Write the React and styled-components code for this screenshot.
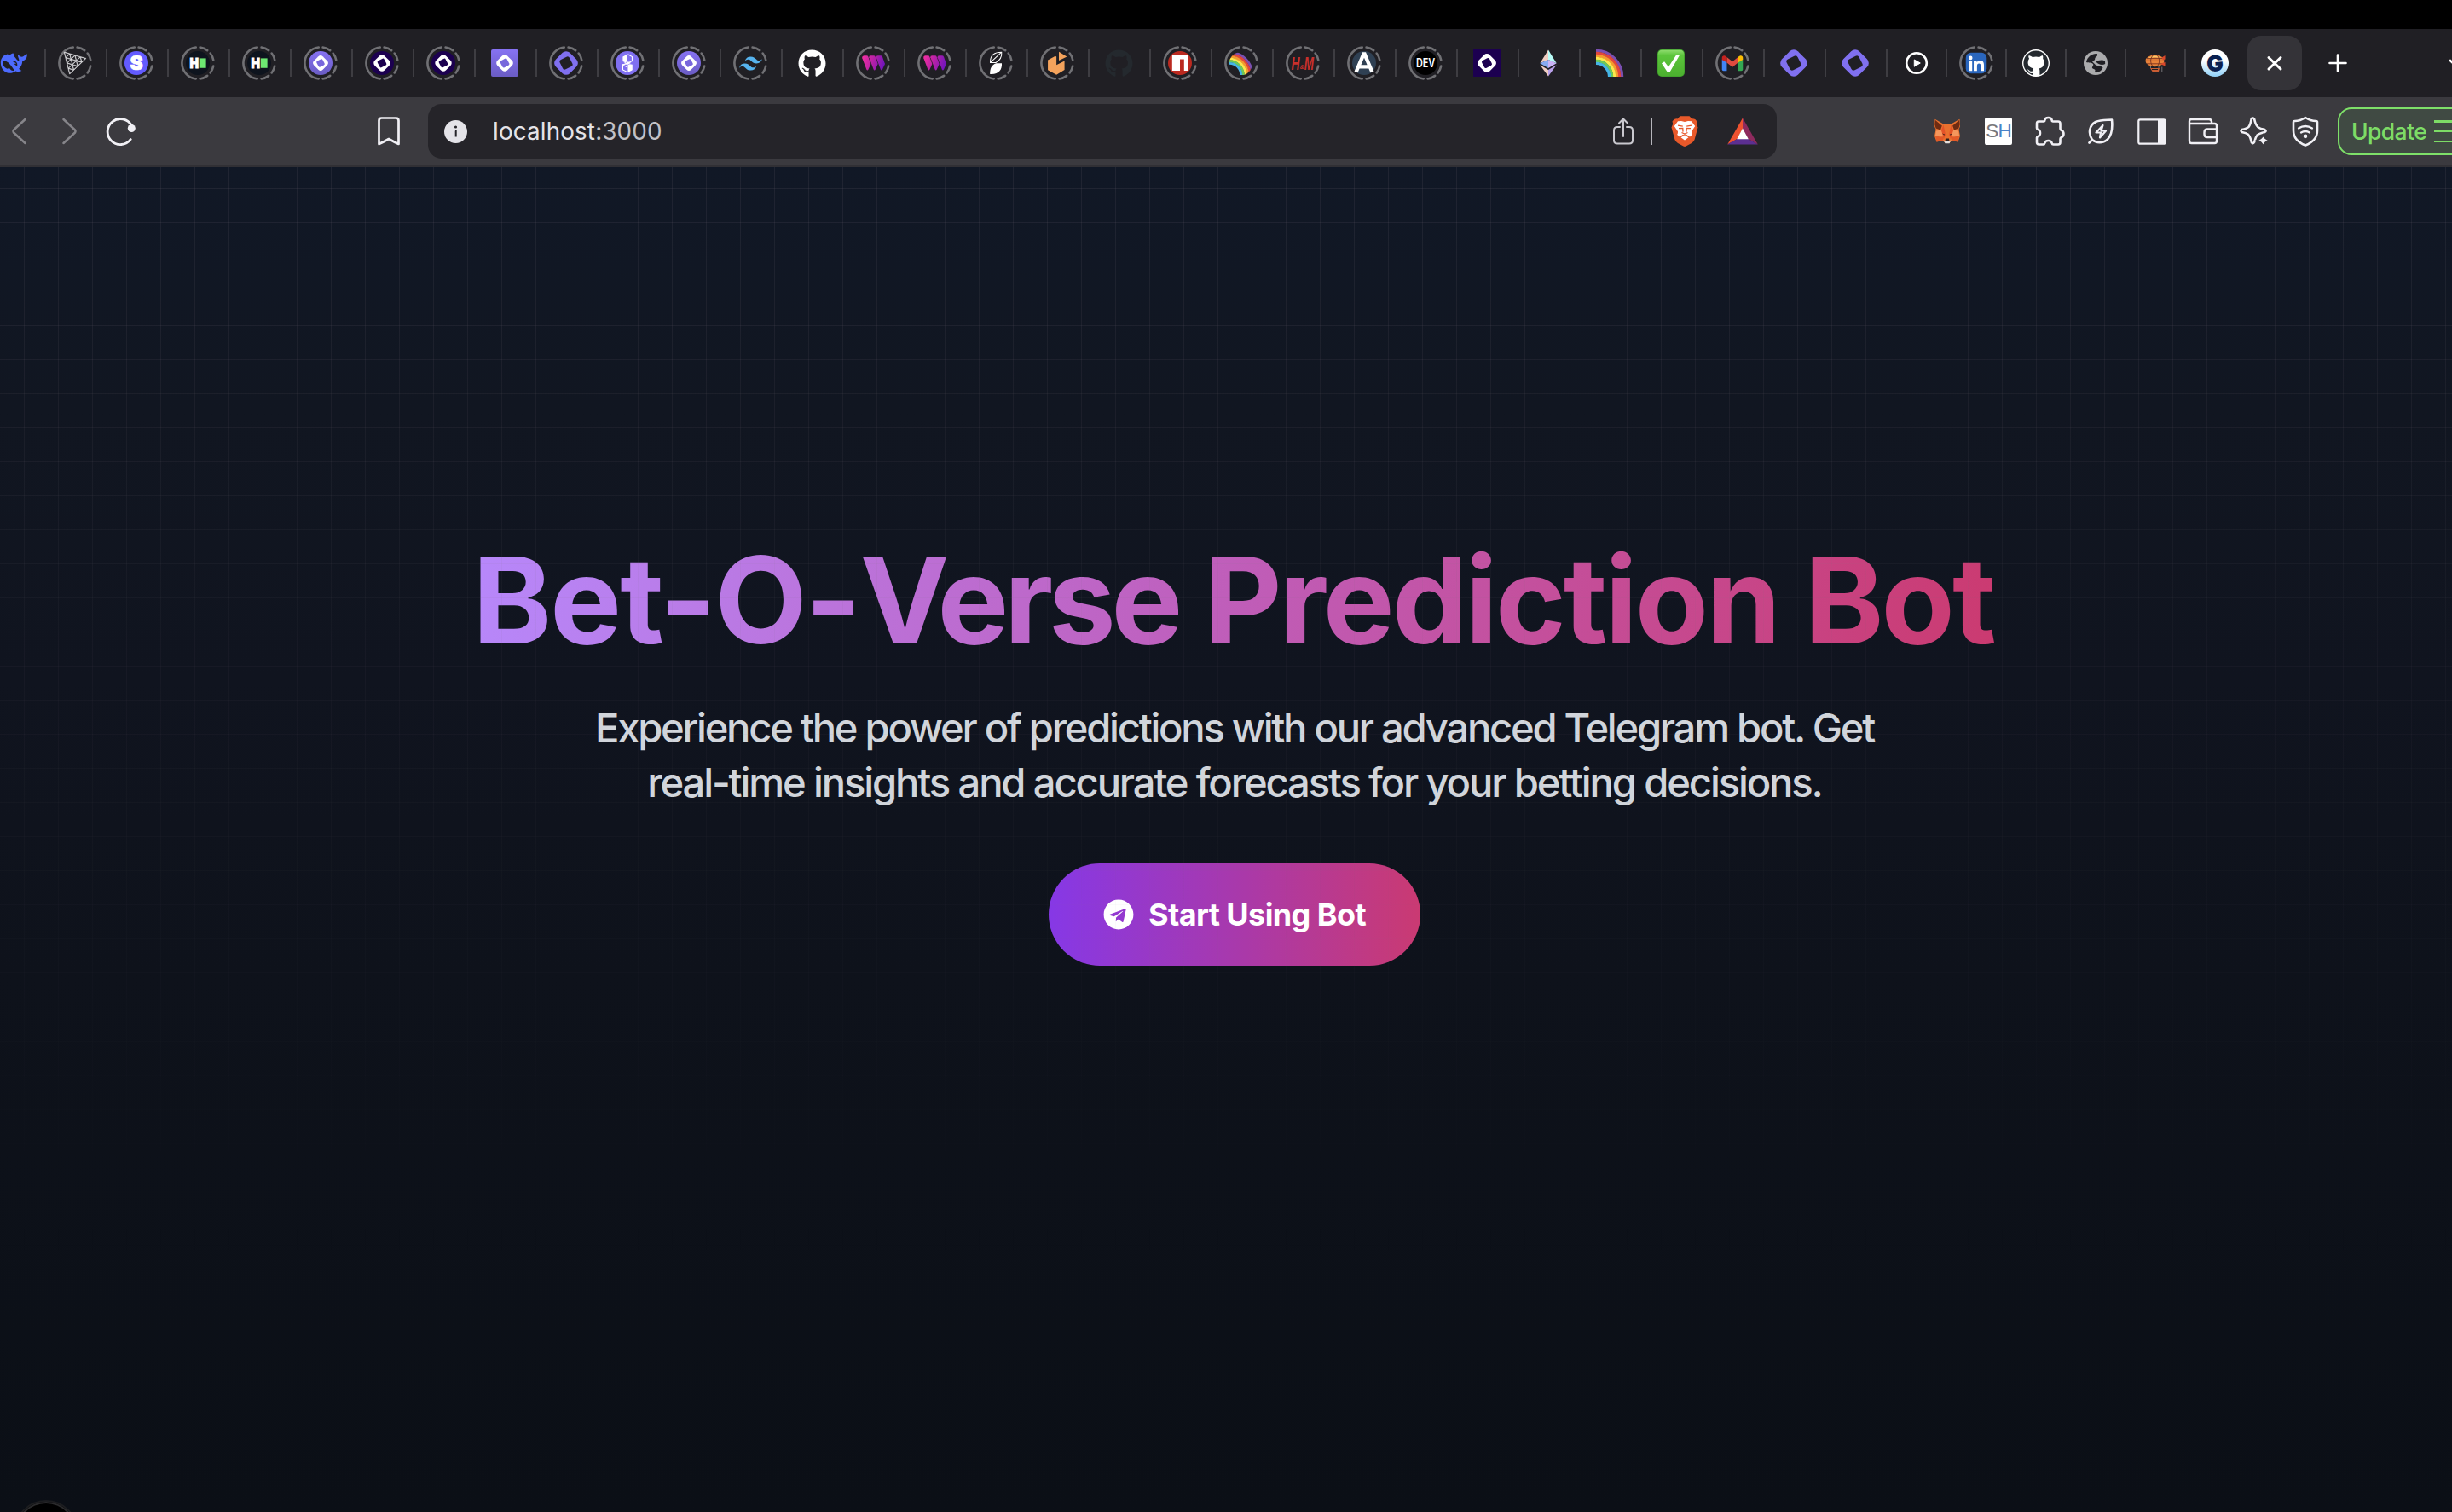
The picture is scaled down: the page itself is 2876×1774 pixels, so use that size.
import React from "react";
import styled, { createGlobalStyle } from "styled-components";
import { FaGithub, FaTelegram } from "react-icons/fa";
import { SiTailwindcss, SiThreedotjs } from "react-icons/si";

const GlobalStyle = createGlobalStyle`
  * { box-sizing: border-box; }
  html, body, #root { margin: 0; height: 100%; }
  body { background: #000; overflow: hidden; font-family: Inter, "Noto Sans", sans-serif; }
`;

const Screen = styled.div`
  height: 1774px;
  width: 100%;
  overflow: hidden;
  display: flex;
  flex-direction: column;
  padding-top: 34px;
  background: #000;
`;

/* ---------- tab strip ---------- */

const TabStrip = styled.div`
  flex: none;
  height: 80px;
  display: flex;
  align-items: center;
  background: #201f24;
  overflow: hidden;
`;

const Tab = styled.div`
  flex: none;
  width: ${(p) => (p.$narrow ? 70 : 72)}px;
  margin-left: ${(p) => (p.$first ? -20 : 0)}px;
  padding-right: ${(p) => (p.$narrow ? 0 : 2)}px;
  display: flex;
  align-items: center;
`;

const TabDivider = styled.span`
  width: 2px;
  height: 32px;
  background: #3e3d42;
`;

const Favicon = styled.span`
  flex: 1;
  display: grid;
  place-items: center;
  > * { grid-area: 1 / 1; display: block; overflow: visible; }
`;

const ActiveTab = styled.div`
  flex: none;
  width: 64px;
  height: 64px;
  margin-left: 4px;
  border-radius: 16px;
  background: #343338;
  display: grid;
  place-items: center;
`;

const NewTab = styled.div`
  flex: none;
  width: 84px;
  display: grid;
  place-items: center;
`;

const TabSearch = styled.div`
  margin-left: 88px;
  flex: none;
  display: grid;
`;

const point = (deg, r) => {
  const a = (deg * Math.PI) / 180;
  return `${(20 + r * Math.sin(a)).toFixed(2)} ${(20 - r * Math.cos(a)).toFixed(2)}`;
};
const arc = (from, to) => `M${point(from, 18.6)}A18.6 18.6 0 0 1 ${point(to, 18.6)}`;
const ringPath = [[8, 37], [52, 79], [101, 128], [143, 172], [187, 353]]
  .map(([a, b]) => arc(a, b))
  .join("");

const Ring = () => (
  <svg width="40" height="40" viewBox="0 0 40 40" fill="none" stroke="#707074" strokeWidth="2.6" strokeLinecap="round">
    <path d={ringPath} />
  </svg>
);

const Glyph = ({ size = 32, children, ...rest }) => (
  <svg width={size} height={size} viewBox="0 0 32 32" {...rest}>
    {children}
  </svg>
);

const Lozenge = ({ color = "#8070f0", hole = "#201f24", scale = 1 }) => (
  <g transform={`translate(16 16) scale(${scale})`}>
    <rect x="-13.2" y="-13.2" width="26.4" height="26.4" rx="6.8" fill={color} transform="rotate(45)" />
    <rect x="-7.2" y="-7.2" width="14.4" height="14.4" rx="3" fill={hole} transform="rotate(-27)" />
  </g>
);

const Whale = () => (
  <Glyph>
    <path
      fill="#4d6bfe"
      d="M0.8 15C1 9 5 6.200 9 5.400L10.500 7C12 6.600 13.800 4.600 15.600 4.600C16.400 6.200 15.800 7 17 8.400C19 10.300 19.600 12.500 22.300 13.600C23 12 21 9.600 20.800 6C22.500 6.800 23 8.400 24.600 8.600C26.600 8.900 28 8.300 29 6.600C30 5.800 30.600 6.200 31.800 5.200C32 9.800 30 12.600 26.300 13.600C26 18 24.500 20.500 22.200 22.800C23 24 24.300 24.600 25.400 25C23.600 26.200 20.600 26.200 18.400 25.400C15 27.800 11.500 28.400 8 27.200C3.300 25.400 0.700 20.800 0.800 15Z"
    />
    <path fill="#201f24" d="M4.200 13.500C8 13.200 11.600 16.600 14 20.600C15.500 22.800 16.600 24 17 25.200C13 25.600 12 23.200 10.600 21.600C9 24.600 4 21 3.200 16.600Z" />
    <path fill="none" stroke="#201f24" strokeWidth="1.400" d="M15.600 14.200C18.300 14 20 16 19.600 18.600L17.400 17" />
  </Glyph>
);

const LetterS = () => (
  <Glyph size={28}>
    <circle cx="16" cy="16" r="16" fill="#635bff" />
    <text x="16" y="25.400" textAnchor="middle" fontFamily="Inter, sans-serif" fontWeight="900" fontSize="26" fill="#fff" stroke="#fff" strokeWidth="0.800">S</text>
  </Glyph>
);

const HashBlock = () => (
  <Glyph size={28}>
    <circle cx="16" cy="16" r="16" fill="#0e141e" />
    <text x="5" y="22.400" textLength="12" lengthAdjust="spacingAndGlyphs" fontFamily="Inter, sans-serif" fontWeight="900" fontSize="17.500" fill="#fff" stroke="#fff" strokeWidth="0.900">H</text>
    <rect x="18" y="9.600" width="9" height="13" fill="#6de872" />
  </Glyph>
);

const TokenCircle = ({ dark }) => (
  <Glyph size={28}>
    <defs>
      <linearGradient id="tokenFill" x1="0" y1="0" x2="0" y2="1">
        <stop offset="0" stopColor="#8672f2" />
        <stop offset="1" stopColor="#6a5cc4" />
      </linearGradient>
    </defs>
    <circle cx="16" cy="16" r="16" fill={dark ? "#1c0050" : "url(#tokenFill)"} />
    <Lozenge color="#fff" hole={dark ? "#1c0050" : "#7867dc"} scale={dark ? 0.7 : 0.63} />
  </Glyph>
);

const TokenSquare = () => (
  <Glyph>
    <rect width="32" height="32" rx="2" fill="url(#tokenFill)" />
    <Lozenge color="#fff" hole="#7867dc" scale={0.62} />
  </Glyph>
);

const TokenNavy = () => (
  <Glyph>
    <rect width="32" height="32" fill="#1c0050" />
    <Lozenge color="#fff" hole="#1c0050" scale={0.69} />
  </Glyph>
);

const TokenPlain = ({ size = 32 }) => (
  <Glyph size={size}>
    <Lozenge />
  </Glyph>
);

const Cubes = () => (
  <Glyph size={28}>
    <circle cx="16" cy="16" r="16" fill="#8070f0" />
    <path fill="#fff" d="M15.500 4.300L9.600 7.400V13.600L15.500 16ZM16.500 18.600V28.600L22.600 25.300V18L19 17.400ZM11 15.800L16 14L21 15.800L16 18.400Z" />
    <path fill="none" stroke="#fff" strokeWidth="1.200" d="M16.500 4.300L22.200 7.400V13.400L17 15.400M15.500 28L9.700 25V18.300L15.500 21.600M9.700 18L15.500 17" />
  </Glyph>
);

const Weights = () => (
  <Glyph size={28}>
    <defs>
      <linearGradient id="webFill" gradientUnits="userSpaceOnUse" x1="1" y1="10" x2="32" y2="20">
        <stop offset="0" stopColor="#f02fa0" />
        <stop offset="0.500" stopColor="#b320a8" />
        <stop offset="1" stopColor="#6a13bd" />
      </linearGradient>
    </defs>
    <g fill="url(#webFill)">
      <path d="M4 6H7.500Q9 6 9.600 7.600L13 17L9.700 24.600Q8.400 27 7.200 24.600L1.500 9.400Q0.800 6.400 4 6Z" />
      <path d="M12.800 6H17Q18.500 6 19.100 7.600L22.500 17L19.200 24.600Q17.900 27 16.700 24.600L10.600 8.400Q10.300 6.200 12.800 6Z" />
      <path d="M22.400 6H26.300Q28 6 28.600 7.600L32 17L28.600 24.600Q27.300 27 26.100 24.600L20.100 8.400Q19.800 6.200 22.400 6Z" />
    </g>
  </Glyph>
);

const Petals = () => (
  <Glyph size={28}>
    <path fill="none" stroke="#fff" strokeWidth="1.200" d="M23.700 1.500C16 1.500 9 4 8.600 13.500V15.500H16C22 12 24.400 8 23.700 1.500ZM9 15L22.500 2.500" />
    <path fill="#fff" d="M8.200 30.800C8 24 10 18.500 16.500 16.400H24C24.600 25 20 31.500 8.200 30.800Z" />
  </Glyph>
);

const PackageBox = () => (
  <Glyph size={28}>
    <path fill="#f4a35c" d="M3.500 12L13.500 6.500L15 7.300V18.500L25.800 13.200V25L15 31.600L3.500 25.500Z" />
    <path fill="#f4a35c" d="M18.300 0.800L29 7.300L18.300 12.600Z" />
  </Glyph>
);

const PackageN = () => (
  <Glyph size={28}>
    <circle cx="16" cy="16" r="16" fill="#bb2a20" />
    <path fill="#fff" d="M5.500 5.500H26.800V26.300H21.500V10.800H16V26.300H5.500Z" />
  </Glyph>
);

const bands = ["#7a4fb0", "#e2463c", "#f59a2e", "#fbe64d", "#6cc95a", "#45b4e6"];

const Rainbow = ({ size = 32, round }) => (
  <Glyph size={size}>
    <defs>
      <clipPath id="roundClip">
        <circle cx="15" cy="17" r="15.500" />
      </clipPath>
    </defs>
    <g clipPath={round ? "url(#roundClip)" : undefined}>
      {bands.map((color, i) => {
        const r = 30.600 - i * 3;
        return <path key={color} fill="none" stroke={color} strokeWidth="3.300" d={`M0 ${32 - r}A${r} ${r} 0 0 1 ${r} 32`} />;
      })}
    </g>
  </Glyph>
);

const HandM = () => (
  <Glyph size={28}>
    <g fontFamily="'Liberation Sans', sans-serif" fontStyle="italic" fontWeight="700" fill="#c9302c">
      <text x="0.500" y="25" fontSize="25" textLength="11.500" lengthAdjust="spacingAndGlyphs">H</text>
      <text x="12.400" y="23.500" fontSize="9" textLength="5.200" lengthAdjust="spacingAndGlyphs">&amp;</text>
      <text x="18" y="25" fontSize="26" textLength="12.800" lengthAdjust="spacingAndGlyphs">M</text>
    </g>
  </Glyph>
);

const LetterA = () => (
  <Glyph size={28}>
    <circle cx="16" cy="16" r="16" fill="#2f4053" />
    <path fill="none" stroke="#fff" strokeWidth="5" strokeLinejoin="bevel" d="M5.200 28L16 2.500L26.800 28M8 21H24" />
  </Glyph>
);

const DevBadge = () => (
  <Glyph size={28}>
    <circle cx="16" cy="16" r="16" fill="#000" />
    <text x="3.300" y="21.600" textLength="25.600" lengthAdjust="spacingAndGlyphs" fontFamily="Inter, sans-serif" fontWeight="600" fontSize="16" fill="#fff">DEV</text>
  </Glyph>
);

const Ether = () => (
  <Glyph>
    <path fill="#f0cdc2" d="M16 0.500L6.300 16.200L16 12Z" />
    <path fill="#b8fbf6" d="M16 0.500L25.700 16.200L16 12Z" />
    <path fill="#88aaf1" d="M6.300 16.200L16 12V22Z" />
    <path fill="#c9b3f5" d="M25.700 16.200L16 12V22Z" />
    <path fill="#f0cdc2" d="M6.300 18.200L16 24V31.600Z" />
    <path fill="#b8a0ea" d="M25.700 18.200L16 24V31.600Z" />
  </Glyph>
);

const CheckMark = () => (
  <Glyph>
    <defs>
      <linearGradient id="checkFill" x1="0" y1="0" x2="0" y2="1">
        <stop offset="0" stopColor="#8fdc6f" />
        <stop offset="0.200" stopColor="#5cc53c" />
        <stop offset="1" stopColor="#4cb02f" />
      </linearGradient>
    </defs>
    <rect width="32" height="32" rx="5" fill="#3f9e2c" />
    <rect x="0.800" y="0.800" width="30.400" height="30.400" rx="4.500" fill="url(#checkFill)" />
    <path fill="#fff" d="M5 16.200L8.200 14.200L13 20.500L22.300 6.200H26.300L14.300 27H12Z" />
  </Glyph>
);

const Mail = () => (
  <Glyph size={28}>
    <path fill="#4285f4" d="M2 11L8.500 14.500V26.500H4Q2 26.500 2 24.500Z" />
    <path fill="#34a853" d="M30 11L23.500 14.500V26.500H28Q30 26.500 30 24.500Z" />
    <path fill="#e04a3f" d="M8.500 8L16 14L23.500 8V15.500L16 21.500L8.500 15.500Z" />
    <path fill="#c5221f" d="M2 9C2 5.600 5.500 4.600 8.500 8V15.500L2 11.500Z" />
    <path fill="#fbbc04" d="M30 9C30 5.600 26.500 4.600 23.500 8V15.500L30 11.500Z" />
  </Glyph>
);

const Play = () => (
  <Glyph>
    <circle cx="16" cy="16" r="11.800" fill="none" stroke="#fff" strokeWidth="2.600" />
    <path fill="#fff" stroke="#fff" strokeWidth="1" strokeLinejoin="round" d="M13.300 12L20.300 16L13.300 20.200Z" />
  </Glyph>
);

const LinkedIn = () => (
  <Glyph size={28}>
    <rect x="2" y="2" width="28" height="28" rx="7" fill="#2a66bd" />
    <circle cx="8.300" cy="9" r="2.600" fill="#fff" />
    <path fill="#fff" d="M6.100 13H10.500V26.500H6.100ZM12.600 13H16.700V15C17.600 13.500 19.300 12.700 21.200 12.700C25 12.700 26.300 15 26.300 19V26.500H22V19.800C22 17.800 21.300 16.600 19.600 16.600C17.900 16.600 17 17.900 17 19.900V26.500H12.600Z" />
  </Glyph>
);

const GithubBadge = () => (
  <Glyph>
    <circle cx="16" cy="16" r="15.300" fill="#24292f" stroke="#fff" strokeWidth="1.400" />
    <path fill="#fff" d="M7.200 8.200Q7.600 6.700 8.400 7.200Q10.500 8 12 9Q16 8 20 9Q22 7.700 23.700 7.100Q24.700 8.200 24.200 10.800Q26 13 25.600 16Q25 21.600 19.400 22.400Q20.600 23.600 20.400 25.400V30.600Q16 32 12.200 30.800V27.800C8.500 28.600 8 26.500 7 24.800L5.200 23.200C7.800 23 8.300 25.800 10 25.800Q11.400 26 12.200 25.200Q12.300 23.500 13.200 22.400Q7 21.400 6.600 16Q6.500 12.800 8 10.800Q7.300 9.600 7.200 8.200Z" />
  </Glyph>
);

const Globe = () => (
  <Glyph>
    <circle cx="16" cy="16" r="14" fill="#ababad" />
    <path fill="#201f24" d="M17.800 5C12.500 4.300 6.500 8 5 14.500C5.500 16.500 10.500 14.500 13 17C14 19 11.500 20.500 12 22C13.500 23.500 15.500 23 15.500 24.500C15 26 15 27.300 16.500 27.200C20 27 23.500 24.500 24.500 21.500C23 19.300 18.500 19.800 16 18.300C14.500 16 10.500 14.300 13 13.200C15.500 12.600 15.200 11.500 15.300 10C16.500 8.600 19 8 17.800 5Z" />
    <path fill="#201f24" d="M16.500 14.500C18.500 12.500 24.500 11.500 27 13.800L27.200 17C24 19 19 18 16.500 14.500Z" />
  </Glyph>
);

const Airship = () => (
  <Glyph>
    <ellipse cx="15.500" cy="13.400" rx="11" ry="6.800" fill="#e8823a" />
    <path fill="#f7c869" d="M7 10.500Q15 5 23 10Q15 8.500 7 10.500Z" />
    <path fill="none" stroke="#6d2a1d" strokeWidth="0.800" d="M5 13.400H26M13 7Q8 13 13 20M18.500 7Q23 13 18.500 20M6 10.600H24.500M6 16.800H24.500" />
    <path fill="#d9482b" d="M23.500 9.500L27.500 7V11.500L25 12.500ZM24 16L27.500 15V19.500L22.500 17.600Z" />
    <path fill="#c95d33" d="M10 22H21L20 26H12.500Z" />
    <path fill="#201f24" d="M12 23H19V24H12Z" />
    <path stroke="#8a8a8c" strokeWidth="0.800" d="M10.500 19V22M20 19V22M23.800 20.500V26" />
  </Glyph>
);

const LetterG = () => (
  <Glyph>
    <defs>
      <linearGradient id="gFill" x1="0" y1="0" x2="0" y2="1">
        <stop offset="0.400" stopColor="#fff" />
        <stop offset="1" stopColor="#8fd0f8" />
      </linearGradient>
    </defs>
    <circle cx="16" cy="16" r="16" fill="url(#gFill)" />
    <text x="16" y="25.600" textAnchor="middle" fontFamily="Inter, sans-serif" fontWeight="900" fontSize="26" fill="#0a2050" transform="rotate(-5 16 16)">G</text>
  </Glyph>
);

const tabs = [
  { icon: <Whale /> },
  { icon: <SiThreedotjs size={26} color="#e4e4e6" stroke="#e4e4e6" strokeWidth={0.4} />, ring: true },
  { icon: <LetterS />, ring: true },
  { icon: <HashBlock />, ring: true },
  { icon: <HashBlock />, ring: true },
  { icon: <TokenCircle />, ring: true },
  { icon: <TokenCircle dark />, ring: true },
  { icon: <TokenCircle dark />, ring: true },
  { icon: <TokenSquare /> },
  { icon: <TokenPlain size={28} />, ring: true },
  { icon: <Cubes />, ring: true },
  { icon: <TokenCircle />, ring: true },
  { icon: <SiTailwindcss size={27} color="#56b3ee" />, ring: true },
  { icon: <FaGithub size={33} color="#fff" /> },
  { icon: <Weights />, ring: true },
  { icon: <Weights />, ring: true },
  { icon: <Petals />, ring: true },
  { icon: <PackageBox />, ring: true },
  { icon: <FaGithub size={33} color="#24292e" /> },
  { icon: <PackageN />, ring: true },
  { icon: <Rainbow size={28} round />, ring: true },
  { icon: <HandM />, ring: true },
  { icon: <LetterA />, ring: true },
  { icon: <DevBadge />, ring: true },
  { icon: <TokenNavy /> },
  { icon: <Ether /> },
  { icon: <Rainbow /> },
  { icon: <CheckMark /> },
  { icon: <Mail />, ring: true },
  { icon: <TokenPlain /> },
  { icon: <TokenPlain /> },
  { icon: <Play />, narrow: true },
  { icon: <LinkedIn />, ring: true, narrow: true },
  { icon: <GithubBadge />, narrow: true },
  { icon: <Globe />, narrow: true },
  { icon: <Airship />, narrow: true },
  { icon: <LetterG />, narrow: true },
];

/* ---------- toolbar ---------- */

const Toolbar = styled.div`
  flex: none;
  height: 82px;
  display: flex;
  align-items: center;
  background: #3b3a3f;
  border-bottom: 2px solid #313035;
  overflow: hidden;
`;

const NavGroup = styled.div`
  flex: none;
  display: flex;
  margin-left: -8px;
`;

const ToolSlot = styled.span`
  flex: none;
  width: ${(p) => p.$w || 60}px;
  display: grid;
  place-items: center;
  > svg { display: block; }
`;

const BookmarkArea = styled.div`
  flex: none;
  margin-left: 254px;
`;

const AddressBar = styled.div`
  flex: none;
  width: 1582px;
  height: 64px;
  margin-left: 16px;
  padding-right: 6px;
  border-radius: 16px;
  background: #252429;
  display: flex;
  align-items: center;
`;

const Address = styled.span`
  flex: 1;
  padding-left: 12px;
  font-size: 27.8px;
  letter-spacing: 0.15px;
  color: #e4e3e8;
`;

const Port = styled.span`
  color: #c2c1c7;
`;

const BarDivider = styled.span`
  width: 2px;
  height: 32px;
  margin: 0 4px;
  background: #b6b5bb;
`;

const Extensions = styled.div`
  flex: none;
  display: flex;
  align-items: center;
  margin-left: 170px;
`;

const ShBadge = styled.span`
  width: 32px;
  height: 32px;
  border-radius: 2px;
  background: #fff;
  display: flex;
  align-items: center;
  justify-content: center;
  font: 400 22.500px/32px "Liberation Sans", sans-serif;
  letter-spacing: -1px;
  color: #77777b;
`;

const ShAccent = styled.b`
  font-weight: 400;
  color: #4a82c8;
`;

const UpdateButton = styled.div`
  flex: none;
  width: 170px;
  height: 56px;
  margin-left: 8px;
  padding-left: 14px;
  border: 2px solid #7ee069;
  border-radius: 16px;
  background: #404a43;
  display: flex;
  align-items: center;
  gap: 9px;
  font-size: 26.5px;
  letter-spacing: -0.6px;
  font-weight: 450;
  color: #7ddc66;
`;

const MenuLines = styled.span`
  width: 40px;
  height: 26px;
  display: flex;
  flex-direction: column;
  justify-content: space-between;
`;

const MenuLine = styled.i`
  height: 2.5px;
  background: #7ddc66;
`;

const Stroke = ({ w, h, color = "#f1f0f5", sw = 2.5, children }) => (
  <svg width={w} height={h} viewBox={`0 0 ${w} ${h}`} fill="none" stroke={color} strokeWidth={sw} strokeLinecap="round" strokeLinejoin="round">
    {children}
  </svg>
);

const BraveLion = () => (
  <svg width="32" height="36" viewBox="0 0 32 36">
    <path fill="#e8592a" d="M10.500 0.300H21.500L24.500 3.500Q28 2.600 30.500 6.500L29.800 9.500L31.500 13.500L27.500 28Q26.500 30.500 24 32L17.500 35.600Q16 36.300 14.500 35.600L8 32Q5.500 30.500 4.500 28L0.500 13.500L2.200 9.500L1.500 6.500Q4 2.600 7.500 3.500Z" />
    <path fill="#fff" d="M12 6L16 7L20 6L24 6.200L28.200 12L24 18.200Q23.800 20.300 24.800 22L22 24.500L18 21.800L16 23L14 21.800L10 24.500L7.200 22Q8.200 20.300 8 18.200L3.800 12L8 6.200Z" />
    <path fill="#fff" d="M11.500 25.200L16 22.600L20.500 25.200L16 28.600Z" />
    <path fill="none" stroke="#e8592a" strokeWidth="1.300" d="M8 11.200L13.800 12.200M24 11.200L18.200 12.200M9 14.600L13.800 14.400L14 18.600M23 14.600L18.200 14.400L18 18.600M12.500 19.500L16 21L19.500 19.500M16 21V23.300" />
  </svg>
);

const Triangle = () => (
  <svg width="36" height="32" viewBox="0 0 36 32">
    <path fill="#ee5230" d="M18 0.500V13L11.500 25L0.200 31.500Z" />
    <path fill="#8e2a5e" d="M18 0.500L35.800 31.500L24.500 25L18 13Z" />
    <path fill="#5c2f91" d="M0.200 31.500H35.800L24.500 25H11.500Z" />
    <path fill="#fff" d="M18 12.500L24.800 25.200H11.200Z" />
  </svg>
);

const Fox = () => (
  <svg width="32" height="30" viewBox="0 0 32 30">
    <path fill="#e8702e" d="M1.500 0.800L11.500 6.500H20.500L30.500 0.800L31 9L29.500 13L31 20.500L28.500 27.500L21.500 26L18.500 28.500H13.500L10.500 26L3.500 27.500L1 20.500L2.500 13L1 9Z" />
    <path fill="#6e2b12" d="M2 2L9.800 8.500L8 13.500L2.600 11.500L1.300 7ZM30 2L22.200 8.500L24 13.500L29.400 11.500L30.700 7Z" />
    <path fill="#f5965c" d="M3 14.500L9 13.500L13 20L7 22L2 20ZM29 14.500L23 13.500L19 20L25 22L30 20Z" />
    <path fill="#e45328" d="M11.500 7.500L14 19L12 24L9 14ZM20.500 7.500L18 19L20 24L23 14Z" />
    <path fill="#e35a28" d="M2 20.500L12 22L10.500 26L3.500 27.500ZM30 20.500L20 22L21.500 26L28.500 27.500Z" />
    <path fill="#30211e" d="M10 17.500L13 18.500L12.500 19.800ZM22 17.500L19 18.500L19.500 19.800ZM14 23.600H18L18.400 26.200H13.600Z" />
    <path fill="#e2dedb" d="M11.500 25.600L13.600 26.200H18.400L20.500 25.600L18.500 29.300H13.500Z" />
  </svg>
);

/* ---------- page ---------- */

const Page = styled.main`
  flex: 1;
  min-height: 0;
  display: grid;
  overflow: hidden;
  background: linear-gradient(180deg, #111826 0%, #111621 18%, #10141f 38%, #0e121b 60%, #0b0f16 100%);
  > * { grid-area: 1 / 1; }
`;

const GridLines = styled.div`
  background-image:
    linear-gradient(to right, rgba(128, 116, 128, 0.14) 1px, transparent 1px),
    linear-gradient(to bottom, rgba(128, 116, 128, 0.14) 1px, transparent 1px);
  background-size: 40px 40px;
  background-position: 28px 25px;
  mask-image: linear-gradient(180deg, #000 0%, rgba(0, 0, 0, 0.45) 35%, transparent 82%);
`;

const Hero = styled.section`
  display: flex;
  flex-direction: column;
  align-items: center;
  padding: 436px 0 0 20px;
  text-align: center;
`;

const Title = styled.h1`
  margin: 0 3px 46px 0;
  font-size: 140.7px;
  line-height: 144px;
  font-weight: 700;
  letter-spacing: -2.85px;
  white-space: nowrap;
  color: transparent;
  background: linear-gradient(100deg, #b788fb 0%, #bf5fbc 48%, #cb3a70 100%);
  background-clip: text;
  -webkit-background-clip: text;
`;

const Tracked = styled.span`
  letter-spacing: ${(p) => p.$tracking}px;
`;

const Lead = styled.p`
  margin: 0 0 63px;
  font-size: 47.2px;
  line-height: 64px;
  letter-spacing: -2.15px;
  font-weight: 450;
  white-space: nowrap;
  color: #d1d5db;
`;

const StartButton = styled.div`
  width: 436px;
  height: 120px;
  border-radius: 60px;
  background: linear-gradient(90deg, #8638e6 0%, #ca3a72 100%);
  display: flex;
  align-items: center;
  justify-content: center;
  gap: 17px;
  font-size: 36px;
  font-weight: 650;
  letter-spacing: -0.6px;
  color: #fff;
`;

const DevBubble = styled.div`
  align-self: end;
  width: 76px;
  height: 14px;
  margin-left: 16px;
  overflow: hidden;
`;

const DevBubbleDisc = styled.div`
  width: 76px;
  height: 76px;
  border-radius: 50%;
  background: #000;
  border: 2px solid #1c1d20;
  box-shadow: inset 0 0 0 2px #2a2a2c;
`;

export default function App() {
  return (
    <Screen>
      <GlobalStyle />
      <TabStrip>
        {tabs.map((tab, i) => (
          <Tab key={i} $first={i === 0} $narrow={tab.narrow}>
            <TabDivider />
            <Favicon>
              {tab.ring && <Ring />}
              {tab.icon}
            </Favicon>
          </Tab>
        ))}
        <ActiveTab>
          <Stroke w={20} h={20} color="#fff" sw={3}>
            <path d="M3 3.500L17 17M17 3.500L3 17" />
          </Stroke>
        </ActiveTab>
        <NewTab>
          <Stroke w={24} h={24} color="#fff" sw={2.6}>
            <path d="M12 2.500V21.500M2.500 12H21.500" />
          </Stroke>
        </NewTab>
        <TabSearch>
          <Stroke w={16} h={10} color="#fff" sw={2.6}>
            <path d="M2 2L8 8L14 2" />
          </Stroke>
        </TabSearch>
      </TabStrip>

      <Toolbar>
        <NavGroup>
          <ToolSlot>
            <Stroke w={18} h={32} color="#86858a"><path d="M16.500 2L3 14.500Q2 16 3 17.500L16.500 30" /></Stroke>
          </ToolSlot>
          <ToolSlot>
            <Stroke w={18} h={32} color="#86858a"><path d="M1.500 2L15 14.500Q16 16 15 17.500L1.500 30" /></Stroke>
          </ToolSlot>
          <ToolSlot>
            <svg width="36" height="34" viewBox="0 0 36 34" fill="none">
              <path d="M29.200 26.500A15 15 0 1 1 30.300 10.300" stroke="#f1f0f5" strokeWidth="2.800" strokeLinecap="round" />
              <circle cx="30.300" cy="13.500" r="4.500" fill="#f1f0f5" />
            </svg>
          </ToolSlot>
        </NavGroup>
        <BookmarkArea>
          <ToolSlot>
            <Stroke w={26} h={34} sw={2.7}>
              <path d="M4.500 1.500H21.500Q24.500 1.500 24.500 4.500V32Q19 29.500 13 26Q7 29.500 1.500 32V4.500Q1.500 1.500 4.500 1.500Z" />
            </Stroke>
          </ToolSlot>
        </BookmarkArea>
        <AddressBar>
          <ToolSlot $w={64}>
            <svg width="27" height="27" viewBox="0 0 27 27">
              <circle cx="13.500" cy="13.500" r="13.500" fill="#e4e3e8" />
              <circle cx="13.500" cy="8" r="1.600" fill="#252429" />
              <path d="M13 12.500H13.700V19.500" fill="none" stroke="#252429" strokeWidth="2" />
            </svg>
          </ToolSlot>
          <Address>localhost<Port>:3000</Port></Address>
          <ToolSlot $w={56}>
            <Stroke w={26} h={34} color="#c9c8ce" sw={2}>
              <path d="M9 12H6Q2 12 2 16V27.500Q2 31.500 6 31.500H20Q24 31.500 24 27.500V16Q24 12 20 12H17M13 23V3M8 7.500L13 2.500L18 7.500" />
            </Stroke>
          </ToolSlot>
          <BarDivider />
          <ToolSlot $w={68}><BraveLion /></ToolSlot>
          <ToolSlot $w={68}><Triangle /></ToolSlot>
        </AddressBar>

        <Extensions>
          <ToolSlot><Fox /></ToolSlot>
          <ToolSlot><ShBadge>S<ShAccent>H</ShAccent></ShBadge></ToolSlot>
          <ToolSlot>
            <Stroke w={36} h={36} sw={2.6}>
              <path d="M5 6.500H11Q12.300 6.500 12.300 5Q12.800 2 16.500 2Q20.200 2 20.700 5Q20.700 6.500 22 6.500H28Q30.500 6.500 30.500 9V15Q30.500 16.500 32 17Q34.500 18 34.500 21Q34.500 24 32 25Q30.500 25.500 30.500 27V31Q30.500 33.500 28 33.500H22.500Q21 33.500 20.700 32Q20 29 16.500 29Q13 29 12.300 32Q12 33.500 10.500 33.500H5.500Q3 33.500 3 31V25.500Q3 24.300 4.500 24Q7 23 7 20Q7 17 4.500 16Q3 15.700 3 14.300V9Q3 6.500 5 6.500Z" />
            </Stroke>
          </ToolSlot>
          <ToolSlot>
            <Stroke w={32} h={32} sw={2.6}>
              <path d="M2.500 29.500L6 26M6 26C0.500 18 3 8.500 10 5C16 2.500 22 3 29 2.500C30 12 29.500 20 24 25.500C18.500 30.500 10.500 30 6 26Z" />
              <path d="M18.500 9L10.500 17.500H16L15 23.500L22 15.500H16.500Z" strokeWidth="2.200" />
            </Stroke>
          </ToolSlot>
          <ToolSlot>
            <svg width="34" height="31" viewBox="0 0 34 31">
              <rect x="1.300" y="1.300" width="31.400" height="28.400" rx="2" fill="none" stroke="#f1f0f5" strokeWidth="2.200" />
              <rect x="24" y="1" width="9" height="29" fill="#f1f0f5" />
            </svg>
          </ToolSlot>
          <ToolSlot>
            <Stroke w={36} h={32} sw={2.4}>
              <path d="M28 6.500V4.500Q27.500 2 25 2H4.500Q2 2 2 4.500V27.500Q2 30 4.500 30H31.500Q34 30 34 27.500V9.500Q34 7 31.500 7H3" />
              <path d="M34 13.500H23Q19.500 13.500 19.500 17V19.500Q19.500 23 23 23H34" />
            </Stroke>
          </ToolSlot>
          <ToolSlot>
            <svg width="36" height="36" viewBox="0 0 36 36">
              <path fill="none" stroke="#f1f0f5" strokeWidth="2.600" strokeLinejoin="round" d="M14.800 3Q16.800 1.500 18.200 4Q19.500 10.500 22.500 13.200Q25 15 30 15.800Q33 17.500 30.500 19Q24 20.500 21.500 22.500Q19.500 25 18.200 30.500Q16.500 33.500 14.800 31Q13.500 24.500 11 21.800Q8.500 20 3.500 19Q1.500 17.500 3.500 16Q9.500 14.800 11.500 12.800Q13.500 10.500 14.800 3Z" />
              <path fill="#f1f0f5" stroke="#3b3a3f" strokeWidth="1.600" d="M28.500 22.500Q30 27 35.500 28.700Q30 30.500 28.500 35.500Q27 30.500 21.500 28.700Q27 27 28.500 22.500Z" />
            </svg>
          </ToolSlot>
          <ToolSlot>
            <Stroke w={32} h={36} sw={2.6}>
              <path d="M16 2Q22 6 28.500 6Q30 6 30 7.500V17Q30 29 16 34.500Q2 29 2 17V7.500Q2 6 3.500 6Q10 6 16 2Z" />
              <path d="M8 14.500Q16 9.500 24 14.500M11 19.500Q16 16.500 21 19.500" strokeWidth="2.300" />
              <circle cx="16" cy="23.800" r="1.600" fill="#f1f0f5" strokeWidth="1.500" />
            </Stroke>
          </ToolSlot>
        </Extensions>
        <UpdateButton>
          Update
          <MenuLines><MenuLine /><MenuLine /><MenuLine /></MenuLines>
        </UpdateButton>
      </Toolbar>

      <Page>
        <GridLines />
        <Hero>
          <Title>
            <Tracked $tracking={-2}>Bet-O-</Tracked>
            <Tracked $tracking={-5.3}>Verse</Tracked> Prediction Bot
          </Title>
          <Lead>
            <Tracked $tracking={-2.28}>
              Experience the power of predictions with our advanced Telegram bot. Get
            </Tracked>
            <br />
            real-time insights and accurate forecasts for your betting decisions.
          </Lead>
          <StartButton>
            <FaTelegram size={36} />
            Start Using Bot
          </StartButton>
        </Hero>
        <DevBubble><DevBubbleDisc /></DevBubble>
      </Page>
    </Screen>
  );
}
